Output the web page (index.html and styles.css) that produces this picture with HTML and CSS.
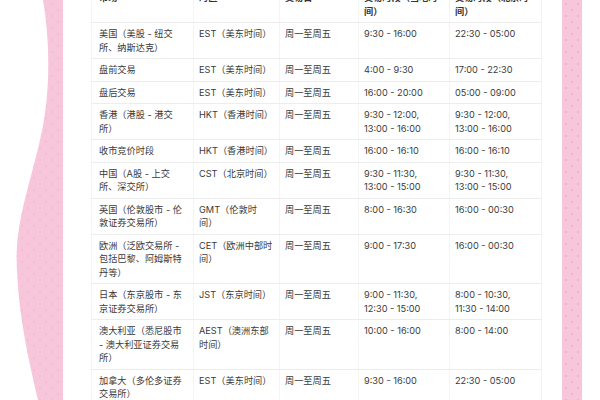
FILE: index.html
```html
<!DOCTYPE html>
<html lang="zh-CN">
<head>
<meta charset="utf-8">
<title>全球股市交易时间</title>
<link rel="stylesheet" href="styles.css">
</head>
<body>
<div class="wave">
  <svg width="63" height="400" viewBox="0 0 63 400">
    <defs>
      <pattern id="dots" width="12" height="12" patternUnits="userSpaceOnUse">
        <circle cx="4" cy="4" r="0.8" fill="#f0b2ca"/>
        <circle cx="10" cy="10" r="0.8" fill="#f0b2ca"/>
      </pattern>
    </defs>
    <path d="M43 0 C50 40 51 95 40 140 C30 185 14 225 17 270 C19 320 30 365 38 400 L63 400 L63 0 Z" fill="#f8c6db"/>
    <path d="M43 0 C50 40 51 95 40 140 C30 185 14 225 17 270 C19 320 30 365 38 400 L63 400 L63 0 Z" fill="url(#dots)"/>
  </svg>
</div>
<main class="card">
  <table class="hours">
    <colgroup>
      <col class="c1"><col class="c2"><col class="c3"><col class="c4"><col class="c5">
    </colgroup>
    <thead>
      <tr><th>市场</th><th>时区</th><th>交易日</th><th>交易时段（当地时<br>间）</th><th>交易时段（北京时<br>间）</th></tr>
    </thead>
    <tbody>
      <tr><td>美国（美股 - 纽交<br>所、纳斯达克）</td><td>EST（美东时间）</td><td>周一至周五</td><td>9:30 - 16:00</td><td>22:30 - 05:00</td></tr>
      <tr><td>盘前交易</td><td>EST（美东时间）</td><td>周一至周五</td><td>4:00 - 9:30</td><td>17:00 - 22:30</td></tr>
      <tr><td>盘后交易</td><td>EST（美东时间）</td><td>周一至周五</td><td>16:00 - 20:00</td><td>05:00 - 09:00</td></tr>
      <tr><td>香港（港股 - 港交<br>所）</td><td>HKT（香港时间）</td><td>周一至周五</td><td>9:30 - 12:00,<br>13:00 - 16:00</td><td>9:30 - 12:00,<br>13:00 - 16:00</td></tr>
      <tr><td>收市竞价时段</td><td>HKT（香港时间）</td><td>周一至周五</td><td>16:00 - 16:10</td><td>16:00 - 16:10</td></tr>
      <tr><td>中国（A股 - 上交<br>所、深交所）</td><td>CST（北京时间）</td><td>周一至周五</td><td>9:30 - 11:30,<br>13:00 - 15:00</td><td>9:30 - 11:30,<br>13:00 - 15:00</td></tr>
      <tr><td>英国（伦敦股市 - 伦<br>敦证券交易所）</td><td>GMT（伦敦时<br>间）</td><td>周一至周五</td><td>8:00 - 16:30</td><td>16:00 - 00:30</td></tr>
      <tr><td>欧洲（泛欧交易所 -<br>包括巴黎、阿姆斯特<br>丹等）</td><td>CET（欧洲中部时<br>间）</td><td>周一至周五</td><td>9:00 - 17:30</td><td>16:00 - 00:30</td></tr>
      <tr><td>日本（东京股市 - 东<br>京证券交易所）</td><td>JST（东京时间）</td><td>周一至周五</td><td>9:00 - 11:30,<br>12:30 - 15:00</td><td>8:00 - 10:30,<br>11:30 - 14:00</td></tr>
      <tr><td>澳大利亚（悉尼股市<br>- 澳大利亚证券交易<br>所）</td><td>AEST（澳洲东部<br>时间）</td><td>周一至周五</td><td>10:00 - 16:00</td><td>8:00 - 14:00</td></tr>
      <tr><td>加拿大（多伦多证券<br>交易所）</td><td>EST（美东时间）</td><td>周一至周五</td><td>9:30 - 16:00</td><td>22:30 - 05:00</td></tr>
    </tbody>
  </table>
</main>
<div class="strip"></div>
<div class="rest"></div>
</body>
</html>
```
FILE: styles.css
```css
html, body {
  margin: 0;
  padding: 0;
}
body {
  width: 600px;
  height: 400px;
  overflow: hidden;
  background: #ffffff;
  display: flex;
  font-family: "Inter", "Noto Sans CJK SC", sans-serif;
  color: #3a3a3a;
}
.wave {
  width: 63px;
  flex: none;
  height: 400px;
}
.wave svg {
  display: block;
}
.card {
  width: 471px;
  flex: none;
  background: #ffffff;
  padding-left: 28px;
  height: 400px;
  overflow: hidden;
}
.strip {
  width: 20px;
  flex: none;
  height: 400px;
  background-color: #f8c6db;
  background-image:
    radial-gradient(circle, #f0b2ca 0.8px, transparent 1.1px),
    radial-gradient(circle, #f0b2ca 0.8px, transparent 1.1px);
  background-size: 12px 12px, 12px 12px;
  background-position: -2px -2px, 4px 4px;
}
.rest {
  flex: 1;
}
.hours {
  border-collapse: collapse;
  table-layout: fixed;
  width: 450px;
  margin-top: -13px;
  font-size: 9.2px;
  line-height: 13.4px;
}
.c1 { width: 102px; }
.c2 { width: 86px; }
.c3 { width: 79px; }
.c4 { width: 91px; }
.c5 { width: 92px; }
.hours th,
.hours td {
  text-align: left;
  vertical-align: top;
  white-space: nowrap;
  padding: 4.1px 4px 4.1px 5px;
  border: 1px solid #ededed;
  border-top: none;
  border-left-color: #f4f4f4;
  border-right-color: #f4f4f4;
}
.hours th {
  font-weight: 600;
  color: #333333;
}
.hours th:first-child,
.hours td:first-child {
  padding-left: 7px;
}
```
